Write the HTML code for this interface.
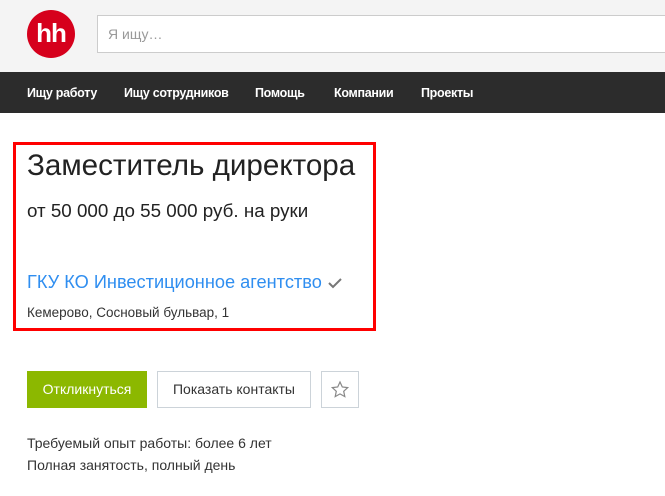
<!DOCTYPE html>
<html><head><meta charset="utf-8"><style>
*{margin:0;padding:0;box-sizing:border-box}
body{width:665px;height:496px;overflow:hidden;background:#fff;font-family:"Liberation Sans",sans-serif;color:#333;position:relative}
.hdr{position:absolute;left:0;top:0;width:665px;height:72px;background:#f4f4f4}
.logo{position:absolute;left:27px;top:10px;width:48px;height:48px;border-radius:50%;background:#d6001c;color:#fff;font-weight:bold;font-size:26px;letter-spacing:-1px;text-align:center;line-height:46px}
.search{position:absolute;left:97px;top:15px;width:580px;height:38px;background:#fff;border:1px solid #ccc;font-size:14px;color:#999;padding-left:10px;line-height:36px}
.nav{position:absolute;left:0;top:72px;width:665px;height:41px;background:#2c2c2c}
.nav span{position:absolute;top:14px;color:#fff;font-size:12.5px;font-weight:bold;letter-spacing:-0.3px}
.box{position:absolute;left:13px;top:142px;width:363px;height:189px;border:3px solid #f00}
.t{position:absolute;left:27px;top:149px;font-size:29.6px;color:#222}
.s{position:absolute;left:27px;top:200px;font-size:18.8px;color:#222}
.c{position:absolute;left:27px;top:272px;font-size:18.2px;color:#2f8ef0}
.a{position:absolute;left:27px;top:305px;font-size:13.5px;color:#333}
.b1{position:absolute;left:27px;top:371px;width:120px;height:37px;background:#8cb800;color:#fff;font-size:14px;text-align:center;line-height:37px}
.b2{position:absolute;left:157px;top:371px;width:154px;height:37px;border:1px solid #ccd3d9;font-size:14px;text-align:center;line-height:35px}
.b3{position:absolute;left:321px;top:371px;width:38px;height:37px;border:1px solid #ccd3d9}
.l{position:absolute;left:27px;font-size:14px;color:#333}
</style></head><body>
<div class="hdr"><div class="logo">hh</div><div class="search">Я ищу…</div></div>
<div class="nav"><span style="left:27px">Ищу работу</span><span style="left:124px">Ищу сотрудников</span><span style="left:255px">Помощь</span><span style="left:334px">Компании</span><span style="left:421px">Проекты</span></div>
<div class="box"></div>
<div class="t">Заместитель директора</div>
<div class="s">от 50 000 до 55 000 руб. на руки</div>
<div class="c">ГКУ КО Инвестиционное агентство <svg width="16" height="12" viewBox="0 0 16 12" style="vertical-align:-1px"><path d="M2 6l4 4 8-8" fill="none" stroke="#777" stroke-width="2"/></svg></div>
<div class="a">Кемерово, Сосновый бульвар, 1</div>
<div class="b1">Откликнуться</div>
<div class="b2">Показать контакты</div>
<div class="b3"><svg width="36" height="35" viewBox="0 0 36 35"><path d="M18 10l2.3 5 5.4.6-4 3.7 1.1 5.3L18 21.9l-4.8 2.7 1.1-5.3-4-3.7 5.4-.6z" fill="none" stroke="#888" stroke-width="1.2"/></svg></div>
<div class="l" style="top:435px">Требуемый опыт работы: более 6 лет</div>
<div class="l" style="top:457px">Полная занятость, полный день</div>
</body></html>
